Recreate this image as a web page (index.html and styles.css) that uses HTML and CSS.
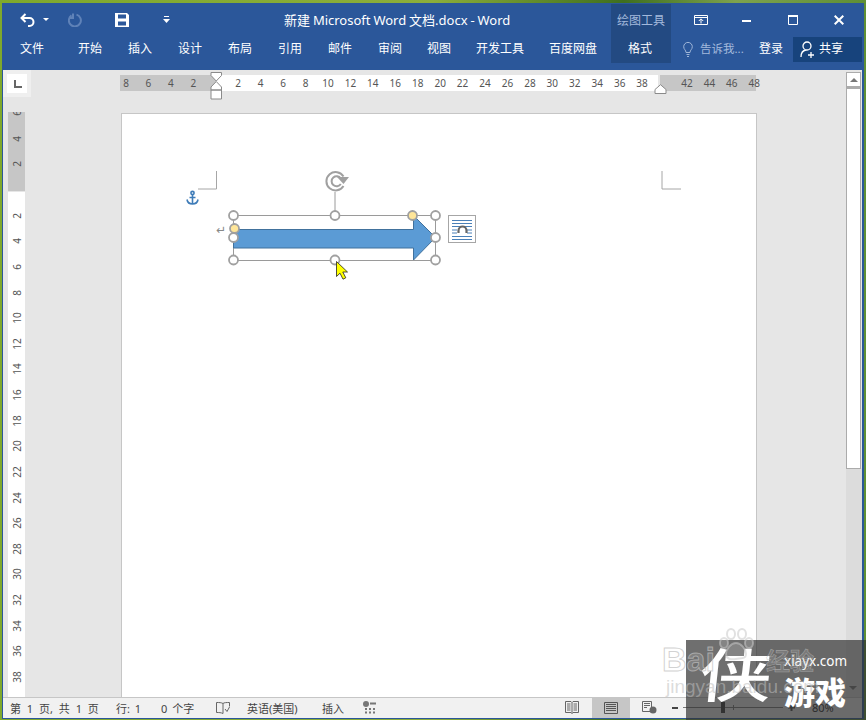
FILE: index.html
```html
<!DOCTYPE html>
<html lang="zh-CN">
<head>
<meta charset="utf-8">
<title>新建 Microsoft Word 文档.docx - Word</title>
<link rel="stylesheet" href="styles.css">
</head>
<body>
<div class="window">
  <header class="head">
    <div class="context-bg"></div>
    <div class="titlebar">
      <svg class="ico undo" width="15" height="14" viewBox="0 0 15 14"><path d="M5.500 1 1.500 5l4 4M2 5h7.500a4 4 0 0 1 0 8H8" fill="none" stroke="#fff" stroke-width="2"/></svg>
      <svg class="ico caret1" width="6" height="3" viewBox="0 0 6 3"><path d="M0 0h6L3 3z" fill="#fff"/></svg>
      <svg class="ico redo" width="14" height="14" viewBox="0 0 14 14"><path d="M8.500 1.600a6 6 0 1 1-5 .8M5 .5v4.500H1" fill="none" stroke="#5f82b8" stroke-width="2"/></svg>
      <svg class="ico save" width="14" height="14" viewBox="0 0 14 14"><path fill-rule="evenodd" d="M0 0h12l2 2v12H0zM3 1.500v4h8v-4zM3 8.500v4h8v-4z" fill="#fff"/></svg>
      <svg class="ico custom" width="7" height="7" viewBox="0 0 7 7"><path d="M1 0h5v1H1zM0 3h7L3.500 7z" fill="#fff"/></svg>
      <span class="doc-title">新建 Microsoft Word 文档.docx - Word</span>
      <span class="context-title">绘图工具</span>
      <svg class="ico w-ribbon" width="14" height="10" viewBox="0 0 14 10"><path d="M.5.5h13v9H.5zM.5 2.500h13M7 8.500V4M4.800 6 7 3.800 9.200 6" fill="none" stroke="#fff"/></svg>
      <svg class="ico w-min" width="9" height="2" viewBox="0 0 9 2"><path d="M0 0h9v2H0z" fill="#fff"/></svg>
      <svg class="ico w-max" width="10" height="10" viewBox="0 0 10 10"><path d="M.5 1.500h9v8h-9z" fill="none" stroke="#fff"/><path d="M0 0h10v2H0z" fill="#fff"/></svg>
      <svg class="ico w-close" width="10" height="10" viewBox="0 0 10 10"><path d="M.7.7l8.600 8.600M9.300.7.7 9.300" stroke="#fff" stroke-width="2"/></svg>
    </div>
    <nav class="tabs">
      <span class="tab t-file">文件</span>
      <span class="tab t-home">开始</span>
      <span class="tab">插入</span>
      <span class="tab">设计</span>
      <span class="tab">布局</span>
      <span class="tab">引用</span>
      <span class="tab">邮件</span>
      <span class="tab">审阅</span>
      <span class="tab">视图</span>
      <span class="tab">开发工具</span>
      <span class="tab">百度网盘</span>
      <span class="tab t-format">格式</span>
      <svg class="bulb" width="10" height="15" viewBox="0 0 10 15"><path d="M3 10.500C3 8 .7 7.500.7 4.700a4.300 4.300 0 0 1 8.600 0C9.300 7.500 7 8 7 10.500zM3.500 12.500h3M4 14.500h2" fill="none" stroke="#9fb6d8"/></svg>
      <span class="tell">告诉我...</span>
      <span class="tab t-login">登录</span>
      <span class="share">
        <svg width="16" height="17" viewBox="0 0 16 17"><path d="M7 1a4 4 0 0 1 0 8 4 4 0 0 1 0-8zM1 16c0-4 2-6.500 5-7M11 11v6M8 14h6" fill="none" stroke="#fff" stroke-width="1.300"/></svg>
        <span class="share-label">共享</span>
      </span>
    </nav>
  </header>

  <div class="body">
    <div class="content">
      <div class="ruler-row">
        <div class="corner"><span class="corner-box"><i class="tab-l"></i></span></div>
        <div class="hruler">
          <span>8</span><span>6</span><span>4</span><span>2</span><span></span><span>2</span><span>4</span><span>6</span><span>8</span><span>10</span><span>12</span><span>14</span><span>16</span><span>18</span><span>20</span><span>22</span><span>24</span><span>26</span><span>28</span><span>30</span><span>32</span><span>34</span><span>36</span><span>38</span><span></span><span>42</span><span>44</span><span>46</span><span>48</span>
          <svg class="indent" width="13" height="28" viewBox="0 0 13 28"><path d="M1 .5h10.500v3L6.250 9 1 3.500zM6.250 9.500 11.500 15v3H1v-3zM1 18h10.500v9H1z" fill="#fff" stroke="#8a8a8a"/></svg>
          <svg class="r-indent" width="13" height="10" viewBox="0 0 13 10"><path d="M1 9.500V5.500L6.500.7 12 5.500v4z" fill="#fff" stroke="#8a8a8a"/></svg>
        </div>
      </div>
      <div class="main">
        <div class="vruler">
          <span>6</span><span>4</span><span>2</span><span></span><span>2</span><span>4</span><span>6</span><span>8</span><span>10</span><span>12</span><span>14</span><span>16</span><span>18</span><span>20</span><span>22</span><span>24</span><span>26</span><span>28</span><span>30</span><span>32</span><span>34</span><span>36</span><span>38</span>
        </div>
        <div class="page">
          <svg class="canvas" width="634" height="584" viewBox="122 114 634 584">
            <path d="M198 189h18.500V171M662 171v18h19" fill="none" stroke="#a6a6a6"/>
            <g fill="none" stroke="#3f7cb8" stroke-width="1.600">
              <circle cx="192.500" cy="193" r="1.600"/>
              <path d="M192.500 195v9M189.500 197.500h6M187 199.500c.5 3 2.500 4.500 5.500 4.500s5-1.500 5.500-4.500"/>
            </g>
            <text class="para" x="216" y="234">↵</text>
            <path d="M335 192v23" stroke="#9a9a9a" fill="none"/>
            <path d="M343.500 176.500a9.200 9.200 0 1 0 0 9.500" fill="none" stroke="#a0a0a0" stroke-width="2"/>
            <path d="M340.800 178.500a5 5 0 1 0 0 5.500" fill="none" stroke="#a0a0a0" stroke-width="2"/>
            <path d="M337 177h12l-5.500 7z" fill="#a0a0a0"/>
            <rect x="233.500" y="215.500" width="202" height="45" fill="none" stroke="#9a9a9a"/>
            <path d="M233.500 229.500H413.500V215.500L435.500 237.500 413.500 260V248H233.500z" fill="#5b9bd5" stroke="#41719c"/>
            <g fill="#fff" stroke="#a0a0a0" stroke-width="1.800">
              <circle cx="233.500" cy="215.500" r="4.500"/>
              <circle cx="335" cy="215.500" r="4.500"/>
              <circle cx="435.500" cy="215.500" r="4.500"/>
              <circle cx="233.500" cy="237.500" r="4.500"/>
              <circle cx="435.500" cy="237.500" r="4.500"/>
              <circle cx="233.500" cy="260" r="4.500"/>
              <circle cx="335" cy="260" r="4.500"/>
              <circle cx="435.500" cy="260" r="4.500"/>
              <circle cx="412.500" cy="215.500" r="4.500" fill="#ffe699"/>
              <circle cx="234.500" cy="228.500" r="4.500" fill="#ffe699"/>
            </g>
            <rect x="448.500" y="215.500" width="27" height="27" fill="#fff" stroke="#a6a6a6"/>
            <path d="M452 220.500h20M452 223.500h20M452 226.500h20M452 230h5M467 230h5M452 233h5M467 233h5M452 236.500h20M452 239.500h20" stroke="#4a80b8" fill="none"/>
            <path d="M458.500 233v-2.500a4 4 0 0 1 8 0V233" fill="#fff" stroke="#666" stroke-width="2.200"/>
            <path d="M336.500 261.500v15l3.500-3.300 3 6 2.800-1.400-3-5.800h4.700z" fill="#ffff00" stroke="#222" stroke-width=".8"/>
          </svg>
        </div>
      </div>
    </div>
    <div class="scrollbar">
      <span class="sb-up"><i></i></span>
      <span class="sb-thumb"></span>
    </div>
  </div>

  <footer class="status">
    <span class="s-page">第 1 页, 共 1 页</span>
    <span class="s-line">行: 1</span>
    <span class="s-count">0 个字</span>
    <svg class="s-book" width="14" height="14" viewBox="0 0 14 14"><path d="M7 2.500C5.500 1.500 3 1.500.5 1.500v10c2.500 0 4.500 0 6.500 1V2.500c1-1 3.500-1 6.500-1v4M9 8l2 2.500 2.500-4.500" fill="none" stroke="#666"/></svg>
    <span class="s-lang">英语(美国)</span>
    <span class="s-ins">插入</span>
    <svg class="s-macro" width="14" height="13" viewBox="0 0 14 13"><circle cx="3" cy="3" r="3" fill="#777"/><path d="M7 1.500h6v2H7zM2 7h2v2H2zM6 7h2v2H6zM10 7h2v2h-2zM2 10.500h2v2H2zM6 10.500h2v2H6zM10 10.500h2v2h-2z" fill="#777"/></svg>
    <span class="view v-read"><svg width="14" height="13" viewBox="0 0 14 13"><path d="M.5.500h5.500L7 1.500 8 .5h5.500v11H8l-1 1-1-1H.5zM7 1.500v11M2 3h3.500M2 5h3.500M2 7h3.500M2 9h3.500M8.500 3H12M8.500 5H12M8.500 7H12M8.500 9H12" fill="none" stroke="#666"/></svg></span>
    <span class="view v-print"><svg width="14" height="12" viewBox="0 0 14 12"><path d="M.5.500h13v11H.5zM2 2.500h10M2 4.500h10M2 6.500h10M2 8.500h10" fill="none" stroke="#555"/></svg></span>
    <span class="view v-web"><svg width="15" height="13" viewBox="0 0 15 13"><path d="M.5.500h9v10h-9zM2 2.500h6M2 4.500h6M2 6.500h3" fill="none" stroke="#666"/><circle cx="11" cy="9" r="3.500" fill="#666"/></svg></span>
    <span class="z-minus"></span>
    <span class="z-track"><i class="z-tick"></i><i class="z-thumb"></i></span>
    <svg class="z-plus" width="7" height="7" viewBox="0 0 7 7"><path d="M0 2.500h7v2H0zM2.500 0h2v7h-2z" fill="#444"/></svg>
    <span class="z-pct">80%</span>
  </footer>
</div>

<div class="sb-down"></div>
<aside class="mark">
  <span class="m-xia">侠</span>
  <span class="m-url">xiayx.com</span>
  <span class="m-game">游戏</span>
</aside>
<div class="baidu">
  <svg class="paw" width="40" height="34" viewBox="0 0 40 34"><g fill="rgba(255,255,255,.15)" stroke="rgba(200,200,200,.55)" stroke-width="2"><ellipse cx="8" cy="15" rx="4" ry="5"/><ellipse cx="15" cy="6" rx="4" ry="5"/><ellipse cx="26" cy="6" rx="4" ry="5"/><ellipse cx="33" cy="15" rx="4" ry="5"/><path d="M20 15c-5 0-10 6-10 11s5 6 10 5 10 0 10-5-5-11-10-11z"/></g></svg>
  <span class="b-bai">Bai</span>
  <span class="b-jy">经验</span>
  <span class="b-url">jingyan.baidu.com</span>
</div>
</body>
</html>
```
FILE: styles.css
```css
html, body { margin: 0; padding: 0; }
body {
  width: 866px; height: 720px; overflow: hidden; position: relative;
  background:
    linear-gradient(to right, #7fa92c 0, #8cae3a 50%, #3f6f1f 72%, #7ea34e 85%, #5f8f35 100%);
  font-family: "Noto Sans", "Noto Sans CJK SC", sans-serif;
}
.window {
  position: absolute; left: 2px; top: 3px; box-sizing: border-box;
  width: 862px; height: 716px;
  background: #2b579a;
  border-left: 1px solid #2b579a; border-right: 2px solid #2b579a; border-bottom: 1px solid #2b579a;
  display: flex; flex-direction: column;
}
.head { position: relative; height: 67px; flex: none; color: #fff; }
.context-bg { position: absolute; left: 608px; top: 1px; width: 60px; height: 59px; background: #234a82; }
.titlebar { position: relative; height: 33px; display: flex; align-items: center; padding-left: 17px; }
.tabs { position: relative; box-sizing: border-box; height: 34px; display: flex; align-items: center; padding: 0 0 10px 17px; font-size: 12px; }
.ico { flex: none; display: block; }
.caret1 { margin-left: 8px; }
.redo { margin-left: 19px; }
.save { margin-left: 33px; }
.custom { margin-left: 34px; }
.doc-title { margin-left: 114px; width: 227px; font-size: 13px; white-space: nowrap; flex: none; word-spacing: -.5px; }
.context-title { margin-left: 106px; width: 48px; font-size: 12px; color: #a3b9dc; flex: none; }
.w-ribbon { margin-left: 29px; }
.w-min { margin-left: 34px; margin-top: 3px; }
.w-max { margin-left: 37px; }
.w-close { margin-left: 36px; }

.tab { width: 24px; margin-right: 26px; flex: none; white-space: nowrap; text-align: center; }
.t-file { margin-right: 34px; }
.tab:nth-child(8), .tab:nth-child(9) { margin-right: 25px; }
.tab:nth-child(10), .tab:nth-child(11) { width: 48px; margin-right: 25px; }
.tab:nth-child(11) { margin-right: 31px; }
.t-format { margin-right: 31px; }
.bulb { flex: none; margin-top: 2px; }
.tell { margin-left: 7px; width: 45px; color: #a3b9dc; white-space: nowrap; font-size: 11.500px; flex: none; }
.t-login { margin-left: 15px; margin-right: 10px; }
.tab.t-login { margin-left: 14px; }
.share { display: flex; align-items: center; gap: 3px; width: 69px; height: 25px; box-sizing: border-box; padding-left: 7px; margin-top: 3px; background: #17437c; flex: none; }
.share-label { margin-top: -4px; }

.body { flex: 1; min-height: 0; display: flex; background: #e6e6e6; }
.content { width: 843px; flex: none; display: flex; flex-direction: column; }
.ruler-row { height: 42px; flex: none; display: flex; align-items: flex-start; }
.corner { width: 28px; height: 27px; background: #efefef; display: flex; align-items: center; justify-content: center; flex: none; }
.corner-box { width: 20px; height: 19px; background: #fff; position: relative; display: block; }
.tab-l { position: absolute; left: 7px; top: 6px; width: 6px; height: 6px; border-left: 2px solid #666; border-bottom: 2px solid #666; }
.hruler {
  position: relative; width: 636px; height: 16px; margin: 5px 0 0 89px; flex: none;
  display: flex; align-items: center;
  background: linear-gradient(to right, #c6c6c6 96px, #fff 96px, #fff 538px, #e6e6e6 538px, #e6e6e6 540px, #c6c6c6 540px);
  font: 10px "Noto Sans", sans-serif; color: #555;
}
.hruler span { width: 22.440px; flex: none; text-align: center; }
.hruler span:first-child { margin-left: -5.200px; }
.indent { position: absolute; left: 90px; top: -3px; }
.r-indent { position: absolute; left: 534px; top: 9px; }

.main { flex: 1; min-height: 0; display: flex; padding-left: 5px; }
.vruler {
  width: 17px; height: 585px; flex: none; overflow: hidden;
  background: linear-gradient(to bottom, #c6c6c6 79px, #e6e6e6 79px, #e6e6e6 80px, #fff 80px);
  font: 10px "Noto Sans", sans-serif; color: #555;
}
.vruler span {
  display: flex; align-items: center; justify-content: center;
  height: 25.630px; width: 17px; writing-mode: vertical-rl; transform: rotate(180deg);
}
.vruler span:first-child { margin-top: -11.800px; }
.page {
  position: relative; box-sizing: border-box; width: 636px; height: 584px; margin: 1px 0 0 96px;
  background: #fff; border: 1px solid #c6c6c6; border-bottom: 0; flex: none; overflow: hidden;
}
.canvas { display: block; }
.para { font: 12px "DejaVu Sans", sans-serif; fill: #888; }

.scrollbar { width: 16px; flex: none; display: flex; flex-direction: column; background: linear-gradient(to bottom, #e6e6e6 398px, #dcdcdc 398px); }
.sb-up { box-sizing: border-box; width: 15px; height: 16px; margin-top: 2px; background: #fff; border: 1px solid #ababab; border-bottom-width: 2px; display: flex; align-items: center; justify-content: center; flex: none; }
.sb-up i { width: 0; height: 0; border-left: 4px solid transparent; border-right: 4px solid transparent; border-bottom: 4px solid #777; }
.sb-thumb { box-sizing: border-box; width: 15px; height: 381px; background: #fff; border: 1px solid #ababab; flex: none; }

.status {
  height: 21px; box-sizing: border-box; flex: none; display: flex; align-items: center;
  background: #f1f1f1; border-top: 1px solid #c6c6c6; color: #444; font-size: 11px; white-space: nowrap; padding: 0 0 1px 7px;
}
.status span { flex: none; }
.s-page { width: 90px; word-spacing: 3px; }
.s-line { margin-left: 16px; width: 25px; word-spacing: 2px; }
.s-count { margin-left: 20px; width: 35px; word-spacing: 2px; }
.s-book { margin-left: 20px; flex: none; }
.s-lang { margin-left: 17px; width: 55px; }
.s-ins { margin-left: 20px; width: 24px; }
.s-macro { margin-left: 17px; flex: none; }
.view { display: flex; align-items: center; justify-content: center; height: 20px; }
.v-read { margin-left: 176px; width: 38px; }
.v-print { width: 38px; background: #c6c6c6; margin-left: 1px; }
.v-web { width: 38px; }
.z-minus { width: 6px; height: 2px; background: #444; margin-left: 4px; }
.z-track { position: relative; width: 100px; height: 1px; background: #777; margin-left: 5px; }
.z-thumb { position: absolute; left: 38px; top: -5px; width: 4px; height: 11px; background: #333; }
.z-tick { position: absolute; left: 50px; top: -2px; width: 1px; height: 5px; background: #777; }
.z-plus { margin-left: 5px; flex: none; }
.z-pct { margin-left: 17px; width: 26px; color: #222; }

.baidu { position: absolute; left: 0; top: 0; width: 866px; height: 720px; pointer-events: none; }
.paw { position: absolute; left: 716px; top: 628px; }
.b-bai, .b-jy, .b-url { position: absolute; white-space: nowrap; }
.b-bai { left: 662px; top: 640px; font: 700 34px "Liberation Sans", sans-serif; color: rgba(255,255,255,.15); -webkit-text-stroke: 1px rgba(190,190,190,.7); }
.b-jy { left: 766px; top: 642px; font: 700 24px "Noto Sans CJK SC", sans-serif; color: rgba(255,255,255,.15); -webkit-text-stroke: .6px rgba(190,190,190,.6); }
.b-url { left: 666px; top: 676px; font: 400 19px "Liberation Sans", sans-serif; color: rgba(190,190,190,.55); }
.sb-down { position: absolute; left: 849px; top: 686px; width: 0; height: 0; border-left: 4px solid transparent; border-right: 4px solid transparent; border-top: 4px solid #777; }

.mark { position: absolute; left: 686px; top: 640px; width: 180px; height: 80px; background: rgba(50, 50, 50, .7); color: #fff; }
.mark span { position: absolute; white-space: nowrap; }
.m-xia { left: 14px; top: -13px; font: 500 58px/90px "Noto Sans CJK SC", sans-serif; transform: skewX(-6deg) scaleX(1.25); transform-origin: left center; }
.m-url { left: 98px; top: 11px; font: 400 13.500px/20px "Noto Sans", sans-serif; }
.m-game { left: 98px; top: 31px; font: 900 31px/40px "Noto Sans CJK SC", sans-serif; }
```
